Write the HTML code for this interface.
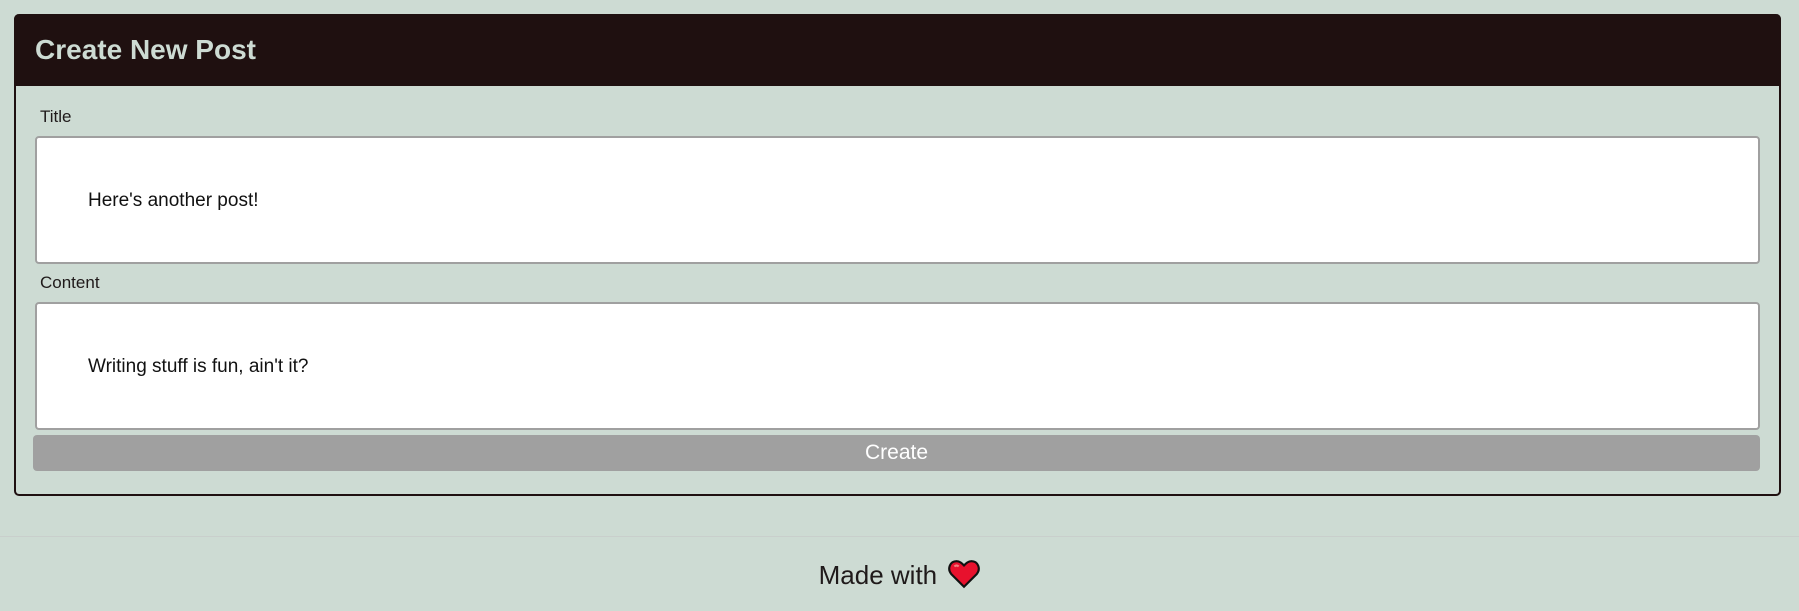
<!DOCTYPE html>
<html><head><style>
body{margin:0;background:#cddbd3;font-family:"Liberation Sans",sans-serif;width:1799px;height:611px;position:relative;overflow:hidden}
.card{position:absolute;left:14px;top:14px;width:1767px;height:482px;border:2px solid #1f1010;border-top:none;border-radius:5px;box-sizing:border-box}
.hdr{position:absolute;left:14px;top:14px;width:1767px;height:72px;background:#1f1010;border-radius:5px 5px 0 0}
.hdr span{position:absolute;left:21px;top:20px;font-size:28px;font-weight:bold;color:#cddbd3}
.lbl{position:absolute;left:40px;font-size:17px;color:#1f1a1a}
.inp{position:absolute;left:35px;width:1725px;height:128px;background:#fff;border:2px solid #a0a0a0;border-radius:4px;box-sizing:border-box}
.inp span{position:absolute;left:51px;top:52px;font-size:19px;color:#111}
.btn{position:absolute;left:33px;top:435px;width:1727px;height:36px;background:#a0a0a0;border-radius:4px;color:#fff;font-size:21px;text-align:center;line-height:36px}
.line{position:absolute;left:0;top:536px;width:100%;height:1px;background:#c9cfcc}
.foot{position:absolute;left:0;width:100%;top:559px;text-align:center;font-size:26px;color:#1f1a1a}
</style></head><body>
<div class="card"></div>
<div class="hdr"><span>Create New Post</span></div>
<div class="lbl" style="top:107px">Title</div>
<div class="inp" style="top:136px"><span>Here's another post!</span></div>
<div class="lbl" style="top:273px">Content</div>
<div class="inp" style="top:302px"><span>Writing stuff is fun, ain't it?</span></div>
<div class="btn">Create</div>
<div class="line"></div>
<div class="foot">Made with <svg width="32" height="30" viewBox="0 0 30 28" style="vertical-align:-5px;margin-left:4px"><path d="M15 26 L3 14 C-1 9 2 2 8 2 C11 2 13 4 15 6 C17 4 19 2 22 2 C28 2 31 9 27 14 Z" fill="#e8112d" stroke="#111" stroke-width="2"/><path d="M6 7 Q8 5 10 7" stroke="#f08080" stroke-width="2" fill="none"/></svg></div>
</body></html>
